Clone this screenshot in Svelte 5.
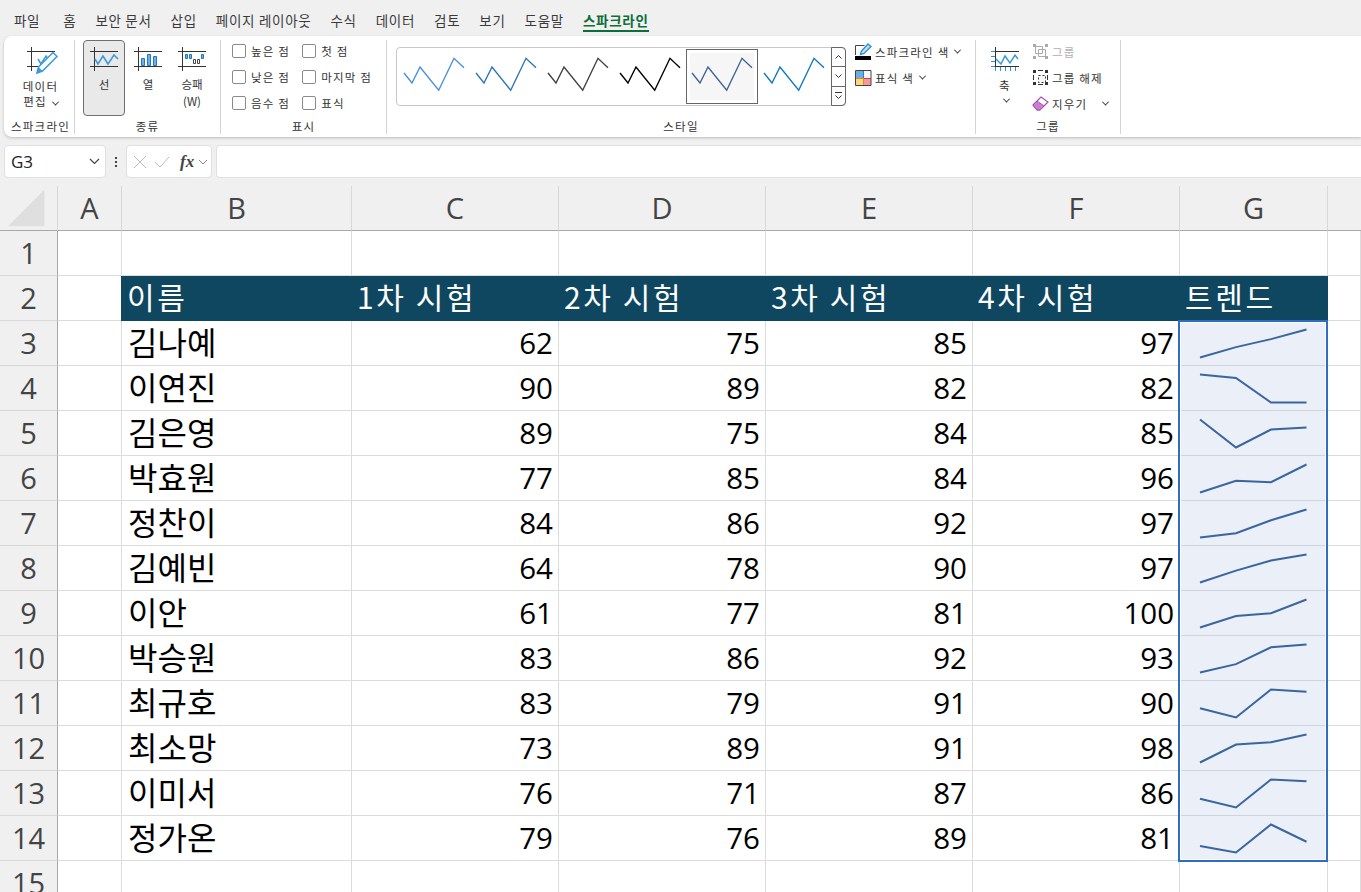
<script>
  const tabs = ['파일','홈','보안 문서','삽입','페이지 레이아웃','수식','데이터','검토','보기','도움말'];
  const columns = ['A','B','C','D','E','F','G'];
  const heads = ['이름','1차 시험','2차 시험','3차 시험','4차 시험','트렌드'];
  const people = [
    ['김나예',62,75,85,97],['이연진',90,89,82,82],['김은영',89,75,84,85],['박효원',77,85,84,96],
    ['정찬이',84,86,92,97],['김예빈',64,78,90,97],['이안',61,77,81,100],['박승원',83,86,92,93],
    ['최규호',83,79,91,90],['최소망',73,89,91,98],['이미서',76,71,87,86],['정가온',79,76,89,81]
  ];
  const styles = ['#4a90d9','#2e75b6','#404040','#000000','#3f6397','#0f77c6'];
  const xs = [20, 56, 91, 126.5];
  function spark(vals) {
    const min = Math.min(...vals), max = Math.max(...vals);
    return vals.map((v, i) => `${xs[i]},${36.5 - (v - min) / (max - min) * 28}`).join(' ');
  }
</script>

<div class="app">
  <nav class="tabs">
    {#each tabs as t}<span class="tab">{t}</span>{/each}
    <span class="tab active">스파크라인</span>
  </nav>

  <section class="ribbon">
    <div class="group g1">
      <div class="gbody">
        <div class="bigbtn edit">
          <svg width="32" height="30" viewBox="0 0 32 30">
            <path d="M0 6.500H28M0 21.500H11M4.500 2V26" stroke="#333" fill="none"/>
            <path d="M11 14l3 5 5-8 3 4" stroke="#3a9ad9" stroke-width="1.500" fill="none"/>
            <path d="M10 28l1.500-6L26 7.500l4 4L15.500 26z" fill="#fff" stroke="#3a9ad9" stroke-width="1.500"/>
            <path d="M10 28l1.500-6 4 4z" fill="#3a9ad9"/>
          </svg>
          <span>데이터</span>
          <span>편집 <i class="chev"></i></span>
        </div>
      </div>
      <div class="glabel">스파크라인</div>
    </div>

    <div class="group g2">
      <div class="gbody types">
        <div class="bigbtn type on">
          <svg width="30" height="26" viewBox="0 0 30 26">
            <path d="M1 6.500H29M1 21.500H29M5.500 2V26" stroke="#333" fill="none"/>
            <path d="M6 14l3 5 5-8 5 8 6-9 4 4" stroke="#3a9ad9" stroke-width="1.500" fill="none"/>
          </svg>
          <span>선</span>
        </div>
        <div class="bigbtn type">
          <svg width="30" height="26" viewBox="0 0 30 26">
            <path d="M1 6.500H29M1 21.500H29M5.500 2V26" stroke="#333" fill="none"/>
            <path d="M8.500 13.500h3v7h-3zM14.500 9.500h3v11h-3zM20.500 11.500h3v9h-3z" fill="#6db2e6" stroke="#1f78c1"/>
          </svg>
          <span>열</span>
        </div>
        <div class="bigbtn type">
          <svg width="30" height="26" viewBox="0 0 30 26">
            <path d="M1 6.500H29M1 21.500H29M5.500 2V26" stroke="#333" fill="none"/>
            <path d="M8.500 9.500h2v4h-2zM12.500 9.500h2v4h-2zM24.500 9.500h2v4h-2z" fill="#6db2e6" stroke="#1f78c1"/>
            <path d="M16.500 14.500h2v4h-2zM20.500 14.500h2v4h-2z" fill="#fff" stroke="#444"/>
          </svg>
          <span>승패</span>
          <span class="w">(W)</span>
        </div>
      </div>
      <div class="glabel">종류</div>
    </div>

    <div class="group g3">
      <div class="gbody checks">
        <div class="ckcol">
          <label class="ck"><i></i>높은 점</label>
          <label class="ck"><i></i>낮은 점</label>
          <label class="ck"><i></i>음수 점</label>
        </div>
        <div class="ckcol">
          <label class="ck"><i></i>첫 점</label>
          <label class="ck"><i></i>마지막 점</label>
          <label class="ck"><i></i>표식</label>
        </div>
      </div>
      <div class="glabel">표시</div>
    </div>

    <div class="group g4">
      <div class="gbody stylebody">
        <div class="gallery">
          <div class="thumbs">
            {#each styles as c, i}
              <div class="thumb" class:sel={i === 4}>
                <svg width="64" height="40" viewBox="0 0 64 40">
                  <path d="M2 16l8 10 8-16 18.700 23.300 15.300-32 10 9.400" fill="none" stroke={c} stroke-width="1.400"/>
                </svg>
              </div>
            {/each}
          </div>
          <div class="scroll">
            <span><svg width="9" height="6" viewBox="0 0 9 6"><path d="M1.500 4.500l3-3 3 3" fill="none" stroke="#333"/></svg></span>
            <span><svg width="9" height="6" viewBox="0 0 9 6"><path d="M1.500 1.500l3 3 3-3" fill="none" stroke="#333"/></svg></span>
            <span><svg width="9" height="8" viewBox="0 0 9 8"><path d="M1 .500h7M1.500 3.500l3 3 3-3" fill="none" stroke="#333"/></svg></span>
          </div>
        </div>
        <div class="colors">
          <div class="crow">
            <svg width="17" height="17" viewBox="0 0 17 17">
              <path d="M.500 12v-9.500h9" fill="none" stroke="#444"/>
              <path d="M0 13h16v4H0z" fill="#000"/>
              <path d="M5.500 11.500l1-3.500 6.500-7 3 2.500-7 7z" fill="#bfe0f7" stroke="#2b8fd8" stroke-width="1.400"/>
            </svg>
            <span>스파크라인 색</span><i class="chev"></i>
          </div>
          <div class="crow">
            <svg width="17" height="16" viewBox="0 0 17 16">
              <path d="M1 1h7.500v7H1z" fill="#6aaee6"/><path d="M8.500 1H16v7H8.500z" fill="#f4f6fa"/>
              <path d="M1 8h7.500v7H1z" fill="#fbd58a"/><path d="M8.500 8H16v7H8.500z" fill="#f9989a"/>
              <path d="M8.500 1v7" stroke="#2b7fc9"/><path d="M1 8.500h7.500M8.500 8v7" stroke="#e88a1a"/><path d="M9 8.500h7" stroke="#d83b3b"/>
              <path d="M.500.500h15.500v15H.500z" fill="none" stroke="#444"/>
            </svg>
            <span>표식 색</span><i class="chev"></i>
          </div>
        </div>
      </div>
      <div class="glabel">스타일</div>
    </div>

    <div class="group g5">
      <div class="gbody axisbody">
        <div class="axis">
          <svg width="30" height="26" viewBox="0 0 30 26">
            <path d="M1 6.500H5M1 11.500H5M1 16.500H5M1 21.500H5M5.500 21.500V26M10.500 21.500V26M15.500 21.500V26M20.500 21.500V26M25.500 21.500V26" stroke="#2f92d6" fill="none"/>
            <path d="M5 6.500H29M5 21.500H29M5.500 2V21.500" stroke="#333" fill="none"/>
            <path d="M6 14l5 5 4-8 5 7 5-8 3 4" stroke="#3a9ad9" stroke-width="1.500" fill="none"/>
          </svg>
          <span>축</span>
          <i class="chev"></i>
        </div>
        <div class="grpcol">
          <div class="grow off">
            <svg width="17" height="17" viewBox="0 0 17 17">
              <path d="M1 1h3v3H1zM13 1h3v3h-3zM1 13h3v3H1zM13 13h3v3h-3z" fill="#aaa"/>
              <path d="M3.500 3.500h7v7h-7zM6.500 6.500h7v7h-7z" fill="none" stroke="#aaa"/>
            </svg>
            <span>그룹</span>
          </div>
          <div class="grow">
            <svg width="17" height="17" viewBox="0 0 17 17">
              <path d="M1 1h3v3H1zM13 1h3v3h-3zM1 13h3v3H1zM13 13h3v3h-3z" fill="#333"/>
              <path d="M6 1.500h5M1.500 6v5M15.500 6v5M6 15.500h5" stroke="#333" fill="none"/>
              <path d="M6.500 6.500h7v7h-7z" stroke="#333" stroke-dasharray="2 2" fill="#f6f6f6"/>
            </svg>
            <span>그룹 해제</span>
          </div>
          <div class="grow">
            <svg width="17" height="15" viewBox="0 0 17 15">
              <path d="M1 9l8-8 7 5-8 8H5z" fill="#fff" stroke="#a84fb5" stroke-width="1.200"/>
              <path d="M1 9l4-4 7 5-4 4H5z" fill="#c77fd0" stroke="#a84fb5"/>
            </svg>
            <span>지우기</span><i class="chev far"></i>
          </div>
        </div>
      </div>
      <div class="glabel">그룹</div>
    </div>
  </section>

  <div class="formula">
    <div class="namebox"><span>G3</span><svg width="11" height="7" viewBox="0 0 11 7"><path d="M1 1l4.500 4.500L10 1" fill="none" stroke="#444" stroke-width="1.200"/></svg></div>
    <div class="dots"><i></i><i></i><i></i></div>
    <div class="fxbox">
      <svg width="14" height="14" viewBox="0 0 14 14"><path d="M1 1l12 12M13 1L1 13" stroke="#bcbcbc" fill="none"/></svg>
      <svg width="16" height="12" viewBox="0 0 16 12"><path d="M1 6l5 5L15 1" stroke="#bcbcbc" fill="none"/></svg>
      <span class="fx">fx</span>
      <svg width="10" height="6" viewBox="0 0 10 6"><path d="M1 1l4 4 4-4" stroke="#888" fill="none"/></svg>
    </div>
    <div class="input"></div>
  </div>

  <div class="sheet">
    <div class="corner"><svg width="40" height="38" viewBox="0 0 40 38"><path d="M38 0v38H0z" fill="#dfdfdf"/></svg></div>
    {#each columns as c}<div class="colh">{c}</div>{/each}
    <div class="colh blank"></div>

    <div class="rowh">1</div>
    {#each Array(8) as _}<div class="cell"></div>{/each}

    <div class="rowh">2</div>
    <div class="cell"></div>
    {#each heads as h}<div class="cell head">{h}</div>{/each}
    <div class="cell"></div>

    {#each people as p, r}
      <div class="rowh">{r + 3}</div>
      <div class="cell"></div>
      <div class="cell name">{p[0]}</div>
      {#each p.slice(1) as v}<div class="cell num">{v}</div>{/each}
      <div class="cell trend">
        <svg width="147" height="44" viewBox="0 0 147 44">
          <polyline points={spark(p.slice(1))} fill="none" stroke="#3a659f" stroke-width="2"/>
        </svg>
      </div>
      <div class="cell"></div>
    {/each}

    <div class="rowh">15</div>
    {#each Array(8) as _}<div class="cell"></div>{/each}

    <div class="selection"></div>
  </div>
</div>

<style>
  :global(body) { margin: 0; background: #f0f0f0; overflow: hidden; }
  .app { width: 1361px; height: 892px; overflow: hidden; background: #f0f0f0; font-family: "Noto Sans CJK KR", "Open Sans", sans-serif; color: #333; }

  .tabs { height: 36px; display: flex; gap: 19px; padding-left: 14px; align-items: center; font-size: 13.500px; box-sizing: border-box; padding-top: 4px; }
  .tab { white-space: pre; line-height: 20px; letter-spacing: .7px; color: #3a3a3a; }
  .tab:first-child { margin-right: 4px; }
  .tab.active { color: #0e6d38; font-weight: 700; box-shadow: 0 2px 0 #0e6d38; }

  .ribbon { margin-left: 4px; height: 101px; background: #fff; border-radius: 8px 0 0 8px; display: flex; box-shadow: 0 1px 3px rgba(0,0,0,.22); font-size: 11.500px; letter-spacing: 1.200px; }
  .group { display: flex; flex-direction: column; align-items: center; box-sizing: border-box; padding-top: 4px; height: 94px; margin-top: 4px; border-right: 1px solid #d4d4d4; }
  .gbody { height: 75px; display: flex; }
  .glabel { height: 14px; line-height: 14px; white-space: nowrap; }
  .g1 { width: 71px; padding-left: 3px; }
  .g2 { width: 146px; }
  .g3 { width: 166px; }
  .g4 { width: 589px; }
  .g5 { width: 145px; }

  .bigbtn { display: flex; flex-direction: column; align-items: center; line-height: 15px; white-space: nowrap; }
  .edit { width: 64px; padding-top: 1px; }
  .edit svg { margin: 0 0 4px 5px; }
  .types { gap: 2px; margin-top: -4px; height: 79px; padding-left: 1px; }
  .type { width: 42px; height: 76px; box-sizing: border-box; padding-top: 4px; border: 1px solid transparent; border-radius: 4px; }
  .type svg { margin-bottom: 6px; }
  .type span { letter-spacing: 0; font-size: 11.500px; }
  .type .w { margin-top: 2px; }
  .type.on { background: #e9e9e9; border-color: #707070; }

  .checks { gap: 12px; width: 100%; box-sizing: border-box; padding-left: 11px; margin-top: -2px; height: 77px; }
  .ckcol { display: flex; flex-direction: column; gap: 9px; }
  .ck { display: flex; align-items: center; gap: 5px; height: 17px; white-space: nowrap; }
  .ck i { width: 12px; height: 12px; border: 1px solid #8a8a8a; border-radius: 2px; display: block; }

  .stylebody { width: 100%; box-sizing: border-box; padding-left: 9px; }
  .gallery { width: 450px; height: 59px; margin-top: 3px; box-sizing: border-box; border: 1px solid #c8c8c8; border-radius: 4px; display: flex; justify-content: space-between; }
  .thumbs { display: flex; padding-top: 1px; padding-left: 1px; }
  .thumb { width: 72px; height: 55px; box-sizing: border-box; display: flex; align-items: center; justify-content: center; border: 1px solid transparent; }
  .thumb.sel { background: #f6f6f6; border-color: #666; box-shadow: inset 0 0 0 3px #fff; }
  .scroll { width: 15px; margin: -1px -1px -1px 0; display: flex; flex-direction: column; border: 1px solid #666; border-radius: 0 4px 4px 0; box-sizing: border-box; }
  .scroll span { flex: 1; display: flex; align-items: center; justify-content: center; }
  .scroll span + span { border-top: 1px solid #666; }
  .colors { margin-left: 9px; display: flex; flex-direction: column; gap: 9px; margin-top: -1px; }
  .crow { display: flex; align-items: center; gap: 3px; height: 17px; white-space: nowrap; }
  .crow .chev { margin-left: 3px; }

  .axisbody { width: 100%; box-sizing: border-box; padding-left: 14px; }
  .axis { width: 30px; display: flex; flex-direction: column; align-items: center; padding-top: 1px; line-height: 16px; gap: 3px; }
  .axis svg { margin-bottom: 3px; }
  .axis .chev { margin-top: 2px; }
  .grpcol { margin-left: 12px; display: flex; flex-direction: column; gap: 9px; margin-top: -1px; }
  .grow { display: flex; align-items: center; gap: 3px; height: 17px; white-space: nowrap; }
  .grow.off { color: #b0b0b0; }

  .chev { display: inline-block; width: 4px; height: 4px; border-right: 1px solid #333; border-bottom: 1px solid #333; transform: rotate(45deg) translate(-1px, -1px); margin-left: 2px; }
  .grow .far { margin-left: 13px; }

  .formula { height: 33px; margin-top: 8px; display: flex; align-items: stretch; padding-left: 4px; }
  .namebox, .fxbox, .input { background: #fff; border: 1px solid #e0e0e0; border-radius: 4px; box-sizing: border-box; }
  .namebox { width: 102px; display: flex; align-items: center; justify-content: space-between; padding: 0 5px 0 6px; font: 17px "Open Sans", sans-serif; color: #222; }
  .dots { width: 20px; display: flex; flex-direction: column; align-items: center; justify-content: center; gap: 2px; }
  .dots i { width: 2px; height: 2px; background: #444; display: block; }
  .fxbox { width: 86px; display: flex; align-items: center; padding-left: 6px; gap: 7px; }
  .fx { font: italic 700 17px "Liberation Serif", serif; color: #444; margin-left: 3px; }
  .fxbox svg:last-child { margin-left: -3px; }
  .input { flex: 1; margin-left: 4px; border-radius: 4px 0 0 4px; border-right: 0; }

  .sheet { position: relative; margin-top: 8px; display: grid; grid-template-columns: 58px 64px 230px 207px 207px 207px 207px 148px 1fr; grid-auto-rows: 45px; background: #fff; font-family: "Open Sans", "Noto Sans CJK KR", sans-serif; }
  .corner { background: #f0f0f0; border-right: 1px solid #d8d8d8; border-bottom: 1px solid #a8a8a8; box-sizing: border-box; display: flex; align-items: center; justify-content: center; }
  .corner svg { margin: 0 0 1px -4px; transform: scale(.97); }
  .colh { background: #f0f0f0; border-bottom: 1px solid #a8a8a8; border-right: 1px solid #d8d8d8; box-sizing: border-box; font-size: 29px; color: #444; text-align: center; line-height: 43px; }
  .colh.blank { border-right: 0; }
  .rowh { background: #f0f0f0; border-bottom: 1px solid #d8d8d8; border-right: 1px solid #a8a8a8; box-sizing: border-box; font-size: 29px; color: #444; text-align: center; line-height: 44px; }
  .cell { border-right: 1px solid #dcdcdc; border-bottom: 1px solid #dcdcdc; box-sizing: border-box; color: #000; white-space: pre; line-height: 43px; }
  .cell.head { background: #0f4761; color: #fff; font-size: 30px; padding-left: 6px; margin-left: -1px; border: 0; line-height: 40px; font-family: "Noto Sans CJK KR", sans-serif; letter-spacing: 2.600px; }
  .cell.name { font-size: 32px; padding-left: 6px; line-height: 40px; font-family: "Noto Sans CJK KR", sans-serif; }
  .cell.num { font-size: 29.500px; text-align: right; padding-right: 5px; }
  .cell.trend { background: #eaeff8; border-bottom-color: #ced3dd; border-right: 0; overflow: hidden; }
  .cell.trend svg { display: block; }
  .selection { position: absolute; left: 1178px; top: 134px; width: 150px; height: 542px; box-sizing: border-box; border: 2px solid #2f6cc4; box-shadow: inset 0 0 0 1px #fff; pointer-events: none; }
</style>
